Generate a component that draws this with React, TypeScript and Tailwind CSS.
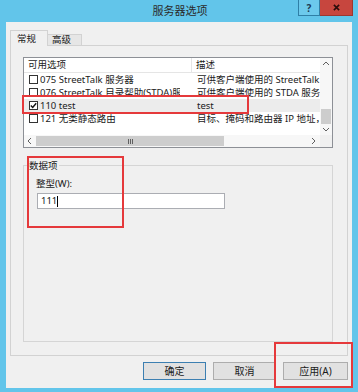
import React from 'react';

const rows = [
  { code: '075 StreetTalk 服务器', desc: '可供客户端使用的 StreetTalk 服务器', checked: false },
  { code: '076 StreetTalk 目录帮助(STDA)服务器', desc: '可供客户端使用的 STDA 服务器', checked: false },
  { code: '110 test', desc: 'test', checked: true, active: true },
  { code: '121 无类静态路由', desc: '目标、掩码和路由器 IP 地址，以及', checked: false },
];

const CheckBox = ({ checked }: { checked: boolean }) => (
  <span className="w-[9px] h-[9px] border border-[#333] bg-white flex items-center justify-center shrink-0">
    {checked && (
      <svg width="7" height="7" viewBox="0 0 7 7">
        <path d="M0.8 3.6 L2.7 5.5 L6.2 1.2" fill="none" stroke="#111" strokeWidth="1.4" />
      </svg>
    )}
  </span>
);

const Arrow = ({ dir }: { dir: 'up' | 'down' | 'left' | 'right' }) => {
  const d = {
    up: 'M1 5 L4 2 L7 5',
    down: 'M1 2 L4 5 L7 2',
    left: 'M5 1 L2 4 L5 7',
    right: 'M2 1 L5 4 L2 7',
  }[dir];
  return (
    <svg width="8" height="8" viewBox="0 0 8 8">
      <path d={d} fill="none" stroke="#606060" strokeWidth="1" />
    </svg>
  );
};

export default function App() {
  return (
    <div className="relative w-[358px] h-[392px] bg-[#62c5ea] overflow-hidden text-[9.5px] leading-none text-[#1a1a1a] font-['Noto_Sans','Noto_Sans_CJK_SC',sans-serif]">
      {/* title bar */}
      <div className="relative h-[22px] flex items-center justify-center">
        <span className="text-[11px] text-[#2b2b2b] ml-[2px] mb-[2px]">服务器选项</span>
        <div className="absolute top-0 right-[5px] flex">
          <div className="w-[22px] h-[16px] border border-[#2f7fa6] border-t-0 bg-[#6cc9ec] flex items-center justify-center text-[10px] font-bold text-[#1b3a55]">?</div>
          <div className="w-[33px] h-[16px] bg-[#c7463e] border border-[#9c3730] border-t-0 border-l-0 flex items-center justify-center">
            <svg width="7" height="7" viewBox="0 0 8 8">
              <path d="M1 1 L7 7 M7 1 L1 7" stroke="#2a0d0b" strokeWidth="1.8" />
            </svg>
          </div>
        </div>
      </div>

      {/* body */}
      <div className="mx-[6px] h-[366px] bg-[#f0f0f0] pt-[8px] px-[4px] flex flex-col">
        {/* tabs */}
        <div className="flex items-end h-[16px] -mb-[1px] relative z-10">
          <div className="w-[38px] h-[16px] border border-[#d2d2d2] border-b-0 bg-[#f0f0f0] pl-[6px] flex items-center">常规</div>
          <div className="w-[34px] h-[12px] border border-[#d2d2d2] border-l-0 bg-[#e6e6e6] pl-[4px] flex items-center">高级</div>
        </div>

        {/* tab panel */}
        <div className="h-[311px] border border-[#d2d2d2] bg-[#f0f0f0] pt-[11px] pl-[12px]">
          {/* list box */}
          <div className="w-[310px] h-[91px] border border-[#8d9096] bg-white flex flex-col">
            <div className="flex h-[77px]">
              <div className="flex-1 flex flex-col overflow-hidden">
                <div className="flex h-[15px] border-b border-[#e5e5e5] items-center">
                  <div className="w-[168px] h-full border-r border-[#e5e5e5] pl-[4px] flex items-center">可用选项</div>
                  <div className="pl-[4px]">描述</div>
                </div>
                {rows.map((r) => (
                  <div key={r.code} className={`flex h-[13px] items-center ${r.active ? 'bg-[#ececec]' : ''}`}>
                    <div className="w-[168px] pl-[5px] pr-[12px] flex items-center gap-[2px]">
                      <CheckBox checked={r.checked} />
                      <span className="min-w-0 whitespace-nowrap overflow-hidden">{r.code}</span>
                    </div>
                    <div className="flex-1 pl-[5px] whitespace-nowrap overflow-hidden">{r.desc}</div>
                  </div>
                ))}
              </div>
              {/* vertical scrollbar */}
              <div className="w-[12px] bg-[#f7f7f7] flex flex-col items-center">
                <div className="h-[12px] flex items-center"><Arrow dir="up" /></div>
                <div className="flex-1 w-full pt-[40px]">
                  <div className="h-[15px] w-[10px] mx-auto bg-[#cdcdcd]" />
                </div>
                <div className="h-[12px] flex items-center"><Arrow dir="down" /></div>
              </div>
            </div>
            {/* horizontal scrollbar */}
            <div className="flex h-[12px]">
              <div className="flex-1 bg-[#f7f7f7] flex items-center">
                <div className="w-[12px] flex justify-center"><Arrow dir="left" /></div>
                <div className="w-[188px] h-[10px] bg-[#cdcdcd] flex items-center justify-center">
                  <div className="flex gap-[1px]">
                    <span className="w-[1px] h-[5px] bg-[#606060]" />
                    <span className="w-[1px] h-[5px] bg-[#606060]" />
                    <span className="w-[1px] h-[5px] bg-[#606060]" />
                  </div>
                </div>
                <div className="flex-1" />
                <div className="w-[12px] flex justify-center"><Arrow dir="right" /></div>
              </div>
              <div className="w-[12px] bg-[#f0f0f0]" />
            </div>
          </div>

          {/* group box */}
          <div className="relative mt-[17px] w-[310px] h-[177px] border border-[#d5d5d5] pl-[12px] pt-[12px]">
            <span className="absolute left-[4px] -top-[6px] px-[1px] bg-[#f0f0f0] leading-[11px]">数据项</span>
            <div className="h-[12px] flex items-center">整型(W):</div>
            <div className="mt-[3px] ml-[1px] w-[188px] h-[16px] border border-[#abadb3] bg-white flex items-center pl-[3px]">
              <span>111</span>
              <span className="w-[1px] h-[11px] bg-[#000]" />
            </div>
          </div>
        </div>

        {/* buttons */}
        <div className="mt-[6px] flex justify-end gap-[7px]">
          <button className="w-[63px] h-[18px] border border-[#3c7fb1] bg-[#e1e1e1] text-[10px] flex items-center justify-center">确定</button>
          <button className="w-[63px] h-[18px] border border-[#adadad] bg-[#e1e1e1] text-[10px] flex items-center justify-center">取消</button>
          <button className="w-[65px] h-[18px] border border-[#adadad] bg-[#e1e1e1] text-[10px] flex items-center justify-center">应用(A)</button>
        </div>
      </div>

      {/* red annotation boxes */}
      <div className="absolute left-[22px] top-[95px] w-[227px] h-[19px] border-2 border-[#e5393b]" />
      <div className="absolute left-[27px] top-[156px] w-[97px] h-[72px] border-2 border-[#e5393b]" />
      <div className="absolute left-[274px] top-[342px] w-[79px] h-[46px] border-2 border-[#e5393b]" />
    </div>
  );
}
